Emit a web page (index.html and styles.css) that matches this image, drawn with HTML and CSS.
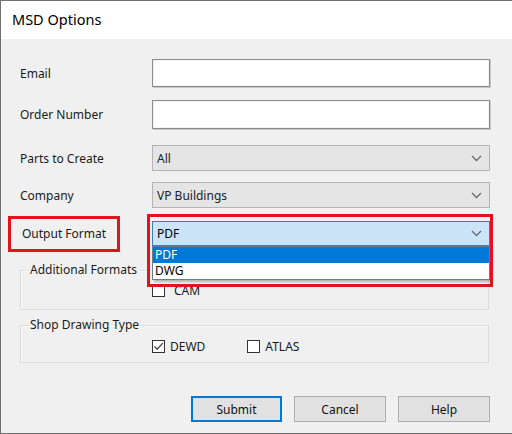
FILE: index.html
```html
<!DOCTYPE html>
<html>
<head>
<meta charset="utf-8">
<title>MSD Options</title>
<link rel="stylesheet" href="styles.css">
</head>
<body>
<div class="window">
  <div class="titlebar">MSD Options</div>
  <div class="content">
    <div class="row row-email">
      <div class="label">Email</div>
      <div class="textbox"></div>
    </div>
    <div class="row row-order">
      <div class="label">Order Number</div>
      <div class="textbox tall"></div>
    </div>
    <div class="row row-parts">
      <div class="label">Parts to Create</div>
      <div class="combo"><span>All</span><svg class="chev" width="11" height="7" viewBox="0 0 11 7"><path d="M1 1 L5.5 5.5 L10 1" fill="none" stroke="#6a6a6a" stroke-width="1.3"/></svg></div>
    </div>
    <div class="row row-company">
      <div class="label">Company</div>
      <div class="combo"><span>VP Buildings</span><svg class="chev" width="11" height="7" viewBox="0 0 11 7"><path d="M1 1 L5.5 5.5 L10 1" fill="none" stroke="#6a6a6a" stroke-width="1.3"/></svg></div>
    </div>
    <div class="row row-output">
      <div class="label"><span class="annot-label">Output Format</span></div>
      <div class="combo-wrap">
        <div class="combo active"><span>PDF</span><svg class="chev" width="11" height="7" viewBox="0 0 11 7"><path d="M1 1 L5.5 5.5 L10 1" fill="none" stroke="#6a6a6a" stroke-width="1.3"/></svg></div>
        <div class="droplist">
          <div class="opt sel">PDF</div>
          <div class="opt">DWG</div>
        </div>
        <div class="annot-combo"></div>
      </div>
    </div>
    <fieldset class="group group-add">
      <legend>Additional Formats</legend>
      <div class="checks">
        <label class="check"><span class="box"></span><span class="ctext">CAM</span></label>
      </div>
    </fieldset>
    <fieldset class="group group-shop">
      <legend>Shop Drawing Type</legend>
      <div class="checks">
        <label class="check"><span class="box"><svg width="13" height="13" viewBox="0 0 13 13"><path d="M2.5 6.5 L5.2 9.2 L10.8 3.2" fill="none" stroke="#333" stroke-width="1.2"/></svg></span><span class="ctext">DEWD</span></label>
        <label class="check atlas"><span class="box"></span><span class="ctext">ATLAS</span></label>
      </div>
    </fieldset>
    <div class="buttons">
      <div class="btn default">Submit</div>
      <div class="btn">Cancel</div>
      <div class="btn">Help</div>
    </div>
  </div>
</div>
</body>
</html>
```
FILE: styles.css
```css
html, body {
  margin: 0;
  padding: 0;
  background: #ffffff;
}
body {
  font-family: "Noto Sans", "Open Sans", sans-serif;
  font-size: 12px;
  color: #000;
}
.window {
  width: 512px;
  height: 434px;
  box-sizing: border-box;
  border-top: 1px solid #707070;
  border-left: 1px solid #707070;
  border-bottom: 1px solid #707070;
  background: #f0f0f0;
  display: flex;
  flex-direction: column;
}
.titlebar {
  height: 38px;
  background: #ffffff;
  padding-left: 11px;
  line-height: 36px;
  font-size: 14.5px;
  color: #000;
}
.content {
  padding-left: 19px;
  display: flex;
  flex-direction: column;
}
.row {
  display: flex;
  align-items: center;
}
.label {
  width: 132px;
  flex: none;
  color: #1a1a1a;
}
.row-email { margin-top: 20px; height: 28px; }
.row-order { margin-top: 13px; height: 29px; }
.row-parts { margin-top: 16px; height: 26px; }
.row-company { margin-top: 11px; height: 26px; }
.row-output { margin-top: 13px; height: 25px; }
.textbox {
  width: 338px;
  height: 28px;
  box-sizing: border-box;
  background: #fff;
  border: 1px solid #8c8c8c;
  box-shadow: inset 0 0 0 1px #f4f4f4, 1px 1px 0 #c8c8c8;
}
.textbox.tall { height: 29px; }
.combo {
  width: 338px;
  height: 26px;
  box-sizing: border-box;
  background: #e5e5e5;
  border: 1px solid #b4b4b4;
  display: flex;
  align-items: center;
  justify-content: space-between;
  padding: 0 7px 0 4px;
  color: #222;
}
.chev { display: block; }
.combo-wrap {
  position: relative;
  width: 338px;
  height: 25px;
}
.combo.active {
  height: 25px;
  background: #cce4f7;
  border-color: #3c7fb1;
  color: #000;
}
.droplist {
  position: absolute;
  left: 0;
  top: 25px;
  width: 338px;
  box-sizing: border-box;
  border: 1px solid #6e7b8b;
  background: #fff;
  box-shadow: 2px 2px 2px rgba(0,0,0,0.25);
  z-index: 2;
}
.opt {
  height: 16px;
  line-height: 16px;
  padding-left: 2px;
  color: #000;
}
.opt.sel {
  background: #0078d7;
  color: #fff;
}
.annot-combo {
  position: absolute;
  left: -5px;
  top: -7px;
  width: 340px;
  height: 67px;
  border: 3px solid #e0151b;
  z-index: 3;
  pointer-events: none;
}
.annot-label {
  display: inline-block;
  margin-left: -12px;
  padding: 6px 11px 7px 11px;
  border: 3px solid #e0151b;
}
.group {
  margin: 0;
  padding: 0;
  min-width: 0;
  width: 469px;
  box-sizing: border-box;
  border: 1px solid #dcdcdc;
  box-shadow: inset 1px 1px 0 #fafafa;
}
.group legend {
  margin-left: 8px;
  padding: 0 1px;
  color: #1a1a1a;
  line-height: 16px;
}
.group-add {
  margin-top: 16px;
  height: 48px;
}
.group-shop {
  margin-top: 7px;
  height: 46px;
}
.checks {
  display: flex;
  align-items: center;
  padding-left: 131px;
}
.group-add .checks { margin-top: 4px; }
.group-shop .checks { margin-top: 5px; }
.check {
  display: flex;
  align-items: center;
  color: #1a1a1a;
}
.box {
  width: 13px;
  height: 13px;
  box-sizing: border-box;
  border: 1px solid #333;
  background: #fff;
  display: inline-block;
  position: relative;
}
.box svg { position: absolute; left: -1px; top: -1px; }
.ctext { margin-left: 9px; }
.group-shop .ctext { margin-left: 5px; }
.atlas { margin-left: 42px; }
.buttons {
  margin-top: 33px;
  display: flex;
  justify-content: flex-end;
  gap: 12px;
  padding-right: 22px;
}
.btn {
  width: 92px;
  height: 26px;
  box-sizing: border-box;
  background: #e1e1e1;
  border: 1px solid #adadad;
  display: flex;
  align-items: center;
  justify-content: center;
  color: #111;
}
.btn.default {
  width: 91px;
  border: 2px solid #0078d7;
}
```
